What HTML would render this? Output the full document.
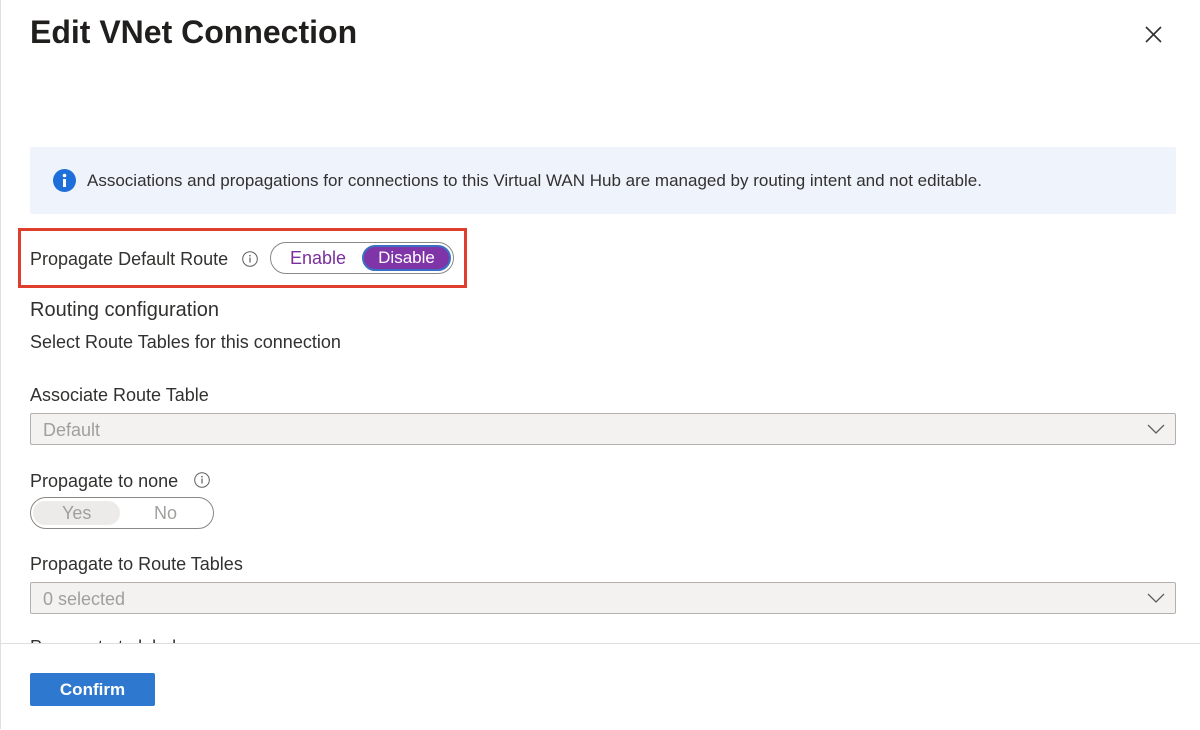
<!DOCTYPE html>
<html><head><style>
body{margin:0;width:1200px;height:729px;background:#fff;font-family:"Liberation Sans",sans-serif;color:#323130;position:relative;overflow:hidden}
.a{position:absolute}
.lbl{font-size:18px;color:#323130}
.sel{position:absolute;left:30px;width:1146px;height:32px;border:1px solid #b3b0ad;background:#f3f2f1;border-radius:2px;box-sizing:border-box}
.sel span{position:absolute;left:12px;top:6px;font-size:18px;color:#a19f9d}
.sel svg{position:absolute;right:10px;top:10px}
</style></head><body>
<div class="a" style="left:0;top:0;width:1px;height:729px;background:#e1dfdd"></div>
<div class="a" style="left:30px;top:14px;font-size:32px;font-weight:bold;color:#201f1e">Edit VNet Connection</div>
<svg class="a" style="left:1145px;top:26px" width="17" height="17"><path d="M1 1L16 16M16 1L1 16" stroke="#323130" stroke-width="1.6"/></svg>
<div class="a" style="left:30px;top:147px;width:1146px;height:67px;background:#eff4fc;border-radius:2px"></div>
<svg class="a" style="left:53px;top:169px" width="23" height="23"><circle cx="11.5" cy="11.5" r="11.5" fill="#1e6fd9"/><rect x="10" y="10" width="3" height="8" fill="#fff"/><circle cx="11.5" cy="6.5" r="1.8" fill="#fff"/></svg>
<div class="a" style="left:87px;top:171px;font-size:17px;color:#323130">Associations and propagations for connections to this Virtual WAN Hub are managed by routing intent and not editable.</div>
<div class="a" style="left:18px;top:228px;width:449px;height:60px;border:3px solid #e03e2d;box-sizing:border-box"></div>
<div class="a lbl" style="left:30px;top:249px">Propagate Default Route</div>
<svg class="a" style="left:242px;top:251px" width="16" height="16"><circle cx="8" cy="8" r="7.3" fill="none" stroke="#605e5c" stroke-width="1"/><rect x="7.4" y="6.5" width="1.2" height="5" fill="#605e5c"/><circle cx="8" cy="4.7" r=".8" fill="#605e5c"/></svg>
<div class="a" style="left:270px;top:242px;width:184px;height:32px;border:1px solid #8a8886;border-radius:16px;box-sizing:border-box"></div>
<div class="a" style="left:290px;top:248px;font-size:18px;color:#7a2f9c">Enable</div>
<div class="a" style="left:362px;top:245px;width:89px;height:26px;background:#7f35a8;border:2px solid #3a6fc4;border-radius:13px;box-sizing:border-box;color:#fff;font-size:17px;text-align:center;line-height:22px">Disable</div>
<div class="a" style="left:30px;top:299px;font-size:20px">Routing configuration</div>
<div class="a lbl" style="left:30px;top:332px">Select Route Tables for this connection</div>
<div class="a lbl" style="left:30px;top:385px">Associate Route Table</div>
<div class="sel" style="top:413px"><span>Default</span><svg width="18" height="11"><path d="M1 1L9 9L17 1" fill="none" stroke="#605e5c" stroke-width="1.3"/></svg></div>
<div class="a lbl" style="left:30px;top:471px">Propagate to none</div>
<svg class="a" style="left:194px;top:472px" width="16" height="16"><circle cx="8" cy="8" r="7.3" fill="none" stroke="#605e5c" stroke-width="1"/><rect x="7.4" y="6.5" width="1.2" height="5" fill="#605e5c"/><circle cx="8" cy="4.7" r=".8" fill="#605e5c"/></svg>
<div class="a" style="left:30px;top:497px;width:184px;height:32px;border:1px solid #8a8886;border-radius:16px;box-sizing:border-box"></div>
<div class="a" style="left:33px;top:501px;width:87px;height:24px;background:#edebe9;border-radius:12px"></div>
<div class="a" style="left:62px;top:503px;font-size:18px;color:#a19f9d">Yes</div>
<div class="a" style="left:154px;top:503px;font-size:18px;color:#a19f9d">No</div>
<div class="a lbl" style="left:30px;top:554px">Propagate to Route Tables</div>
<div class="sel" style="top:582px"><span>0 selected</span><svg width="18" height="11"><path d="M1 1L9 9L17 1" fill="none" stroke="#605e5c" stroke-width="1.3"/></svg></div>
<div class="a lbl" style="left:30px;top:637px">Propagate to labels</div>
<div class="a" style="left:1px;top:643px;width:1199px;height:86px;background:#fff;border-top:1px solid #e1dfdd"></div>
<div class="a" style="left:30px;top:673px;width:125px;height:33px;background:#2f78d0;border-radius:2px;color:#fff;font-weight:bold;font-size:17px;text-align:center;line-height:33px">Confirm</div>
</body></html>
